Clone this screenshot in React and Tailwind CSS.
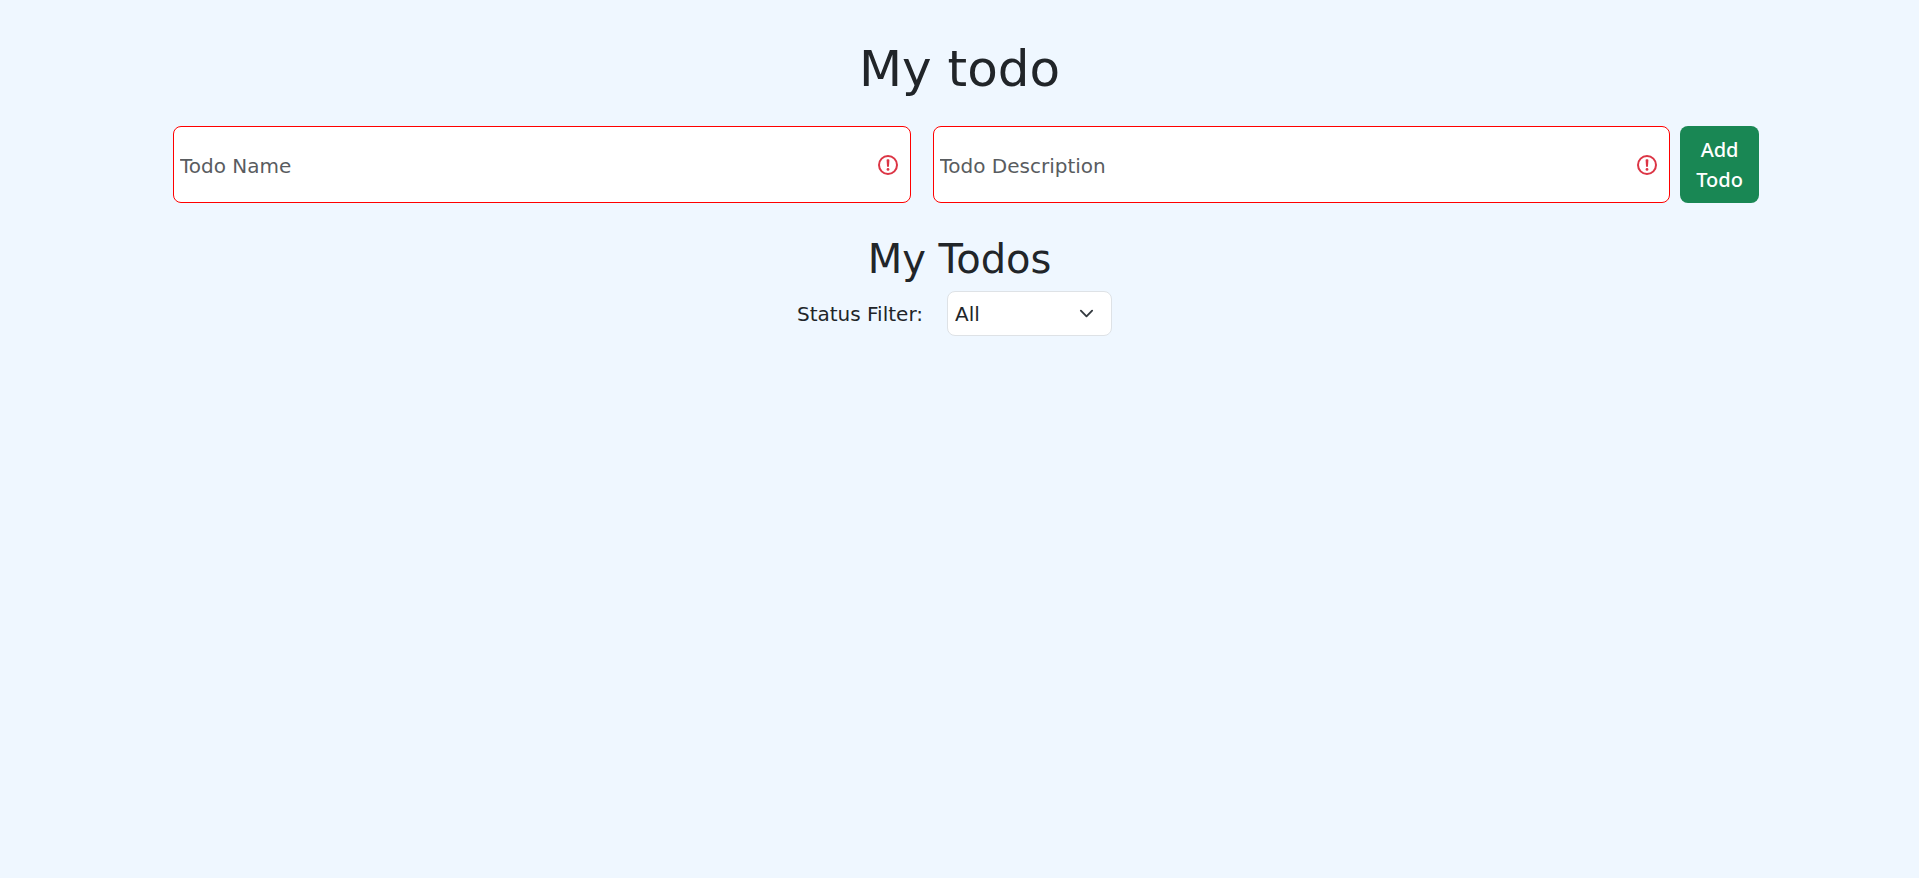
import { useState } from "react";

function AlertIcon() {
  return (
    <svg viewBox="0 0 12 12" className="pointer-events-none mr-2.5 size-6 shrink-0" fill="none" stroke="#dc3545" aria-hidden="true">
      <circle cx="6" cy="6" r="4.5" />
      <path fill="#dc3545" strokeLinejoin="round" d="M5.8 3.6h.4L6 6.5z" />
      <circle cx="6" cy="8.2" r=".7" fill="#dc3545" stroke="none" />
    </svg>
  );
}

function Field({ label, value, onChange }) {
  return (
    <label className="flex h-[77px] min-w-0 flex-1 items-center rounded-lg border border-[#ff0000] bg-white">
      <input
        required
        aria-label={label}
        placeholder={label}
        value={value}
        onChange={(e) => onChange(e.target.value)}
        className="h-full min-w-0 flex-1 bg-transparent px-1.5 pt-0.5 text-[#212529] outline-none placeholder:text-[#595c5f]"
      />
      <AlertIcon />
    </label>
  );
}

export default function App() {
  const [name, setName] = useState("");
  const [description, setDescription] = useState("");
  return (
    <main className="min-h-screen bg-[#eff7ff] pt-[39px] font-['DejaVu_Sans',Verdana,sans-serif] text-[20px] leading-[30px] text-[#212529]">
      <h1 className="text-center text-[50px] leading-[60px]">My todo</h1>
      <form className="mx-auto mt-[27px] flex w-10/12 items-center gap-2.5 pl-[13px]" onSubmit={(e) => e.preventDefault()}>
        <div className="flex min-w-0 flex-1 gap-[22px]">
          <Field label="Todo Name" value={name} onChange={setName} />
          <Field label="Todo Description" value={description} onChange={setDescription} />
        </div>
        <button type="submit" className="h-[77px] w-[79px] shrink-0 rounded-lg bg-[#198754] px-3 font-['Noto_Sans',sans-serif] font-medium text-white">
          Add Todo
        </button>
      </form>
      <h2 className="mt-8 text-center text-[40px] leading-[48px]">My Todos</h2>
      <div className="mt-2 flex items-center justify-center gap-6 pr-2.5">
        <label htmlFor="status">Status Filter:</label>
        <div className="relative w-[165px]">
          <select id="status" className="h-[45px] w-full appearance-none rounded-lg border border-[#dee2e6] bg-white px-[7px]">
            <option>All</option>
            <option>Active</option>
            <option>Completed</option>
          </select>
          <svg viewBox="0 0 16 16" className="pointer-events-none absolute top-[15px] right-[18px] h-[15px] w-[15px]" fill="none" stroke="#343a40" strokeWidth="2" strokeLinecap="round" strokeLinejoin="round" aria-hidden="true">
            <path d="m2 5 6 6 6-6" />
          </svg>
        </div>
      </div>
    </main>
  );
}
